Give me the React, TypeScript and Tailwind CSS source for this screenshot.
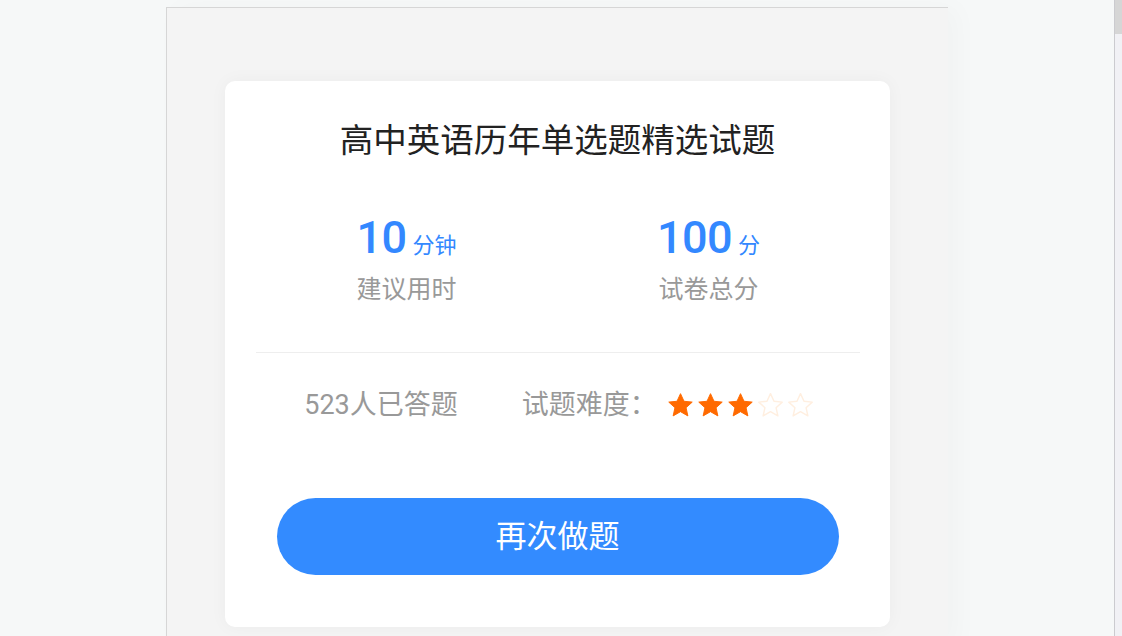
import React from 'react';

const FONT = { fontFamily: 'Roboto, "Noto Sans CJK SC", sans-serif' };

function Star({ filled }: { filled: boolean }) {
  return (
    <svg width="29" height="29" viewBox="0 0 24 24">
      <path
        d="M12 2.2l2.9 6.3 6.8.7-5.1 4.6 1.5 6.8L12 17.1l-6.1 3.5 1.5-6.8L2.3 9.2l6.8-.7z"
        fill={filled ? '#ff6a00' : 'none'}
        stroke={filled ? '#ff6a00' : '#ffefe0'}
        strokeWidth={filled ? 0.8 : 1.2}
        strokeLinejoin="round"
      />
    </svg>
  );
}

function Stat({ value, unit, label }: { value: string; unit: string; label: string }) {
  return (
    <div className="w-[200px] flex flex-col items-center">
      <div className="flex items-baseline text-[#3388ff] h-[52px]">
        <span className="text-[45px] font-medium leading-[52px] tracking-[-0.5px]">{value}</span>
        <span className="text-[22px] ml-[6px] leading-[52px]">{unit}</span>
      </div>
      <div className="mt-[9px] text-[25px] leading-[34px] text-[#999999]">{label}</div>
    </div>
  );
}

export default function App() {
  return (
    <div className="h-[636px] w-full flex overflow-hidden bg-[#f6f8f8]" style={FONT}>
      {/* page area */}
      <div className="flex-1 relative">
        <div className="ml-[166px] mt-[7px] w-[782px] h-[640px] bg-[#f4f4f4] border-t border-l border-[#d6d6d6] shadow-[10px_0_24px_rgba(0,0,0,0.025)]">
          <div className="mx-[58px] mt-[73px] h-[546px] bg-white rounded-[10px] shadow-[0_0_18px_rgba(0,0,0,0.04)] flex flex-col items-center pt-[37px]">
            <h1 className="text-[33.5px] leading-[46px] text-[#222222] font-normal">高中英语历年单选题精选试题</h1>

            <div className="mt-[48px] flex gap-[102px]">
              <Stat value="10" unit="分钟" label="建议用时" />
              <Stat value="100" unit="分" label="试卷总分" />
            </div>

            <div className="mt-[45px] w-[604px] h-px bg-[#eeeeee]" />

            <div className="mt-[35px] pl-[4px] flex items-center text-[27px] leading-[34px] text-[#999999]">
              <span>523人已答题</span>
              <span className="ml-[64px]">试题难度：</span>
              <div className="ml-[9px] flex items-center gap-[1px]">
                <Star filled />
                <Star filled />
                <Star filled />
                <Star filled={false} />
                <Star filled={false} />
              </div>
            </div>

            <button className="mt-[76px] w-[562px] h-[77px] rounded-full bg-[#338bff] text-white text-[31px] leading-none">
              再次做题
            </button>
          </div>
        </div>
      </div>

      {/* scrollbar */}
      <div className="w-[8px] h-full bg-[#f1f1f5] border-l border-[#cbcbcf]">
        <div className="h-[34px] bg-[#d6d6d6]" />
      </div>
    </div>
  );
}
